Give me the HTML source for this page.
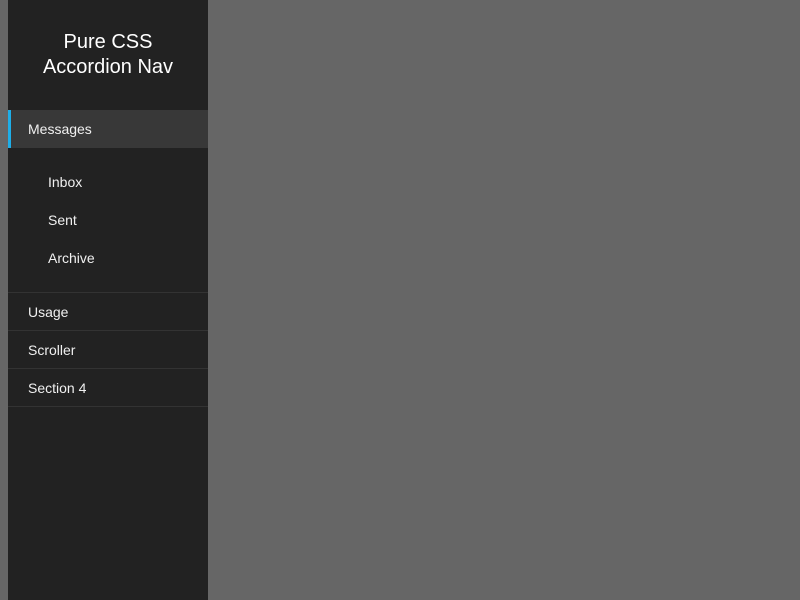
<!DOCTYPE html>
<html><head><style>
*{margin:0;padding:0;box-sizing:border-box}
body{width:800px;height:600px;background:#666;font-family:"Liberation Sans",sans-serif;color:#f0f0f0;overflow:hidden;position:relative}
.side{position:absolute;left:8px;top:0;width:200px;height:600px;background:#222}
h1{position:absolute;top:30px;left:0;width:200px;text-align:center;font-weight:normal;font-size:20px;line-height:25px;color:#fff}
.it{position:absolute;left:0;width:200px;height:38px;line-height:38px;padding-left:20px;font-size:14px}
.act{top:110px;background:#383838;border-left:3px solid #1eaee8;padding-left:17px}
.sub{position:absolute;left:40px;font-size:14px;line-height:20px}
.b{border-bottom:1px solid #333}
</style></head><body>
<div class="side">
<h1>Pure CSS<br>Accordion Nav</h1>
<div class="it act">Messages</div>
<div class="sub" style="top:172px">Inbox</div>
<div class="sub" style="top:210px">Sent</div>
<div class="sub" style="top:248px">Archive</div>
<div class="it b" style="top:254px;height:39px"></div>
<div class="it b" style="top:293px">Usage</div>
<div class="it b" style="top:331px">Scroller</div>
<div class="it b" style="top:369px">Section 4</div>
</div>
</body></html>
